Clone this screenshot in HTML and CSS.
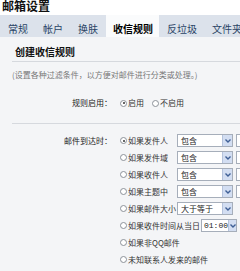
FILE: index.html
```html
<!DOCTYPE html>
<html lang="zh-CN">

<head>
    <meta charset="UTF-8">
    <meta name="viewport" content="width=device-width, initial-scale=1.0">
    <title>邮箱设置</title>
    <link rel="stylesheet" href="styles.css">
</head>

<body>
    <div class="page-title">邮箱设置</div>

    <div class="tabs">
        <a class="tab">常规</a>
        <a class="tab">帐户</a>
        <a class="tab">换肤</a>
        <a class="tab active">收信规则</a>
        <a class="tab">反垃圾</a>
        <a class="tab">文件夹</a>
    </div>

    <div class="panel">
        <div class="panel-head">创建收信规则</div>

        <div class="section">
            <p class="note">(设置各种过滤条件，以方便对邮件进行分类或处理。)</p>
            <div class="field field-enable">
                <div class="field-label">规则启用：</div>
                <div class="field-body inline">
                    <label class="radio"><span class="dot on"></span>启用</label>
                    <label class="radio"><span class="dot"></span>不启用</label>
                </div>
            </div>
        </div>

        <div class="section last">
            <div class="field">
                <div class="field-label rule-label">邮件到达时：</div>
                <div class="field-body">
                    <div class="rule">
                        <label class="radio"><span class="dot on"></span><span class="rule-text">如果发件人</span></label>
                        <div class="select"><span>包含</span><i class="arrow"><svg width="6" height="4" viewBox="0 0 6 4"><polyline points="0.5,0.5 3,3 5.5,0.5" /></svg></i></div>
                        <div class="input"></div>
                    </div>
                    <div class="rule">
                        <label class="radio"><span class="dot"></span><span class="rule-text">如果发件域</span></label>
                        <div class="select"><span>包含</span><i class="arrow"><svg width="6" height="4" viewBox="0 0 6 4"><polyline points="0.5,0.5 3,3 5.5,0.5" /></svg></i></div>
                        <div class="input"></div>
                    </div>
                    <div class="rule">
                        <label class="radio"><span class="dot"></span><span class="rule-text">如果收件人</span></label>
                        <div class="select"><span>包含</span><i class="arrow"><svg width="6" height="4" viewBox="0 0 6 4"><polyline points="0.5,0.5 3,3 5.5,0.5" /></svg></i></div>
                        <div class="input"></div>
                    </div>
                    <div class="rule">
                        <label class="radio"><span class="dot"></span><span class="rule-text">如果主题中</span></label>
                        <div class="select"><span>包含</span><i class="arrow"><svg width="6" height="4" viewBox="0 0 6 4"><polyline points="0.5,0.5 3,3 5.5,0.5" /></svg></i></div>
                        <div class="input"></div>
                    </div>
                    <div class="rule">
                        <label class="radio"><span class="dot"></span><span class="rule-text">如果邮件大小</span></label>
                        <div class="select"><span>大于等于</span><i class="arrow"><svg width="6" height="4" viewBox="0 0 6 4"><polyline points="0.5,0.5 3,3 5.5,0.5" /></svg></i></div>
                    </div>
                    <div class="rule">
                        <label class="radio"><span class="dot"></span><span class="rule-text">如果收件时间从当日</span></label>
                        <div class="select small"><span class="mono">01:00</span><i class="arrow"><svg width="6" height="4" viewBox="0 0 6 4"><polyline points="0.5,0.5 3,3 5.5,0.5" /></svg></i></div>
                    </div>
                    <div class="rule">
                        <label class="radio"><span class="dot"></span><span class="rule-text">如果非QQ邮件</span></label>
                    </div>
                    <div class="rule">
                        <label class="radio"><span class="dot"></span><span class="rule-text">未知联系人发来的邮件</span></label>
                    </div>
                </div>
            </div>
        </div>
    </div>
</body>

</html>
```

FILE: styles.css
```css
html,
body {
    overflow: hidden;
}

body {
    font-family: "Noto Sans CJK SC", "Noto Sans", sans-serif;
    margin: 0;
    padding: 0;
    background-color: #f4f5f7;
    color: #333;
    width: 240px;
}

.page-title {
    height: 15px;
    padding-left: 2px;
    font-size: 12px;
    line-height: 12px;
    font-weight: bold;
    color: #111;
    background-color: #fff;
    box-sizing: border-box;
}

.tabs {
    display: flex;
    height: 22px;
    padding-left: 1px;
    background-color: #dce2eb;
    white-space: nowrap;
}

.tab {
    padding: 6px 7px 0;
    margin-right: 1px;
    font-size: 10px;
    line-height: 16px;
    color: #2a4466;
    flex-shrink: 0;
}

.tab.active {
    padding: 6px 6px 0 7px;
    background-color: #fafbfc;
    color: #000;
    font-weight: bold;
}

.panel {
    padding-left: 12px;
}

.panel-head {
    padding: 8px 3px 2px;
    font-size: 10px;
    line-height: 14px;
    font-weight: bold;
    color: #111;
    border-bottom: 1px solid #d6d9de;
}

.section {
    padding: 7px 0 12px;
    border-bottom: 1px solid #d6d9de;
}

.section.last {
    padding-top: 8px;
    border-bottom: none;
}

.note {
    margin: 0;
    font-size: 8px;
    line-height: 12px;
    color: #777;
    white-space: nowrap;
}

.field {
    display: flex;
    font-size: 8px;
}

.field-enable {
    margin-top: 14px;
    height: 16px;
    line-height: 16px;
}

.field-label {
    width: 100px;
    flex-shrink: 0;
    text-align: right;
    color: #222;
}

.rule-label {
    line-height: 17px;
}

.field-body {
    margin-left: 8px;
    white-space: nowrap;
}

.inline {
    display: flex;
    align-items: center;
}

.radio {
    display: inline-flex;
    align-items: center;
    margin-right: 8px;
    color: #333;
}

.dot {
    width: 7px;
    height: 7px;
    border: 1px solid #8c9299;
    border-radius: 50%;
    background-color: #fff;
    box-sizing: border-box;
    margin-right: 1px;
    position: relative;
}

.dot.on::after {
    content: "";
    position: absolute;
    left: 1.5px;
    top: 1.5px;
    width: 2px;
    height: 2px;
    border-radius: 50%;
    background-color: #333;
}

.rule {
    display: flex;
    align-items: center;
    height: 17px;
}

.rule .radio {
    margin-right: 0;
}

.rule-text {
    min-width: 48px;
}

.select {
    display: flex;
    align-items: center;
    justify-content: space-between;
    width: 56px;
    height: 13px;
    margin-left: 1px;
    padding-left: 3px;
    border: 1px solid #a6aeba;
    background-color: #fff;
    box-sizing: border-box;
    color: #222;
    flex-shrink: 0;
}

.select.small {
    width: 36px;
    padding-left: 2px;
}

.mono {
    font-family: "Liberation Mono", monospace;
    font-size: 8px;
}

.arrow {
    display: flex;
    align-items: center;
    justify-content: center;
    width: 10px;
    height: 11px;
    background-color: #d3def2;
    border-left: 1px solid #b5c3dc;
    box-sizing: border-box;
}

.arrow polyline {
    fill: none;
    stroke: #3f5f96;
    stroke-width: 1.4;
}

.input {
    width: 40px;
    height: 13px;
    margin-left: 3px;
    border: 1px solid #a6aeba;
    background-color: #fff;
    box-sizing: border-box;
    flex-shrink: 0;
}
```
